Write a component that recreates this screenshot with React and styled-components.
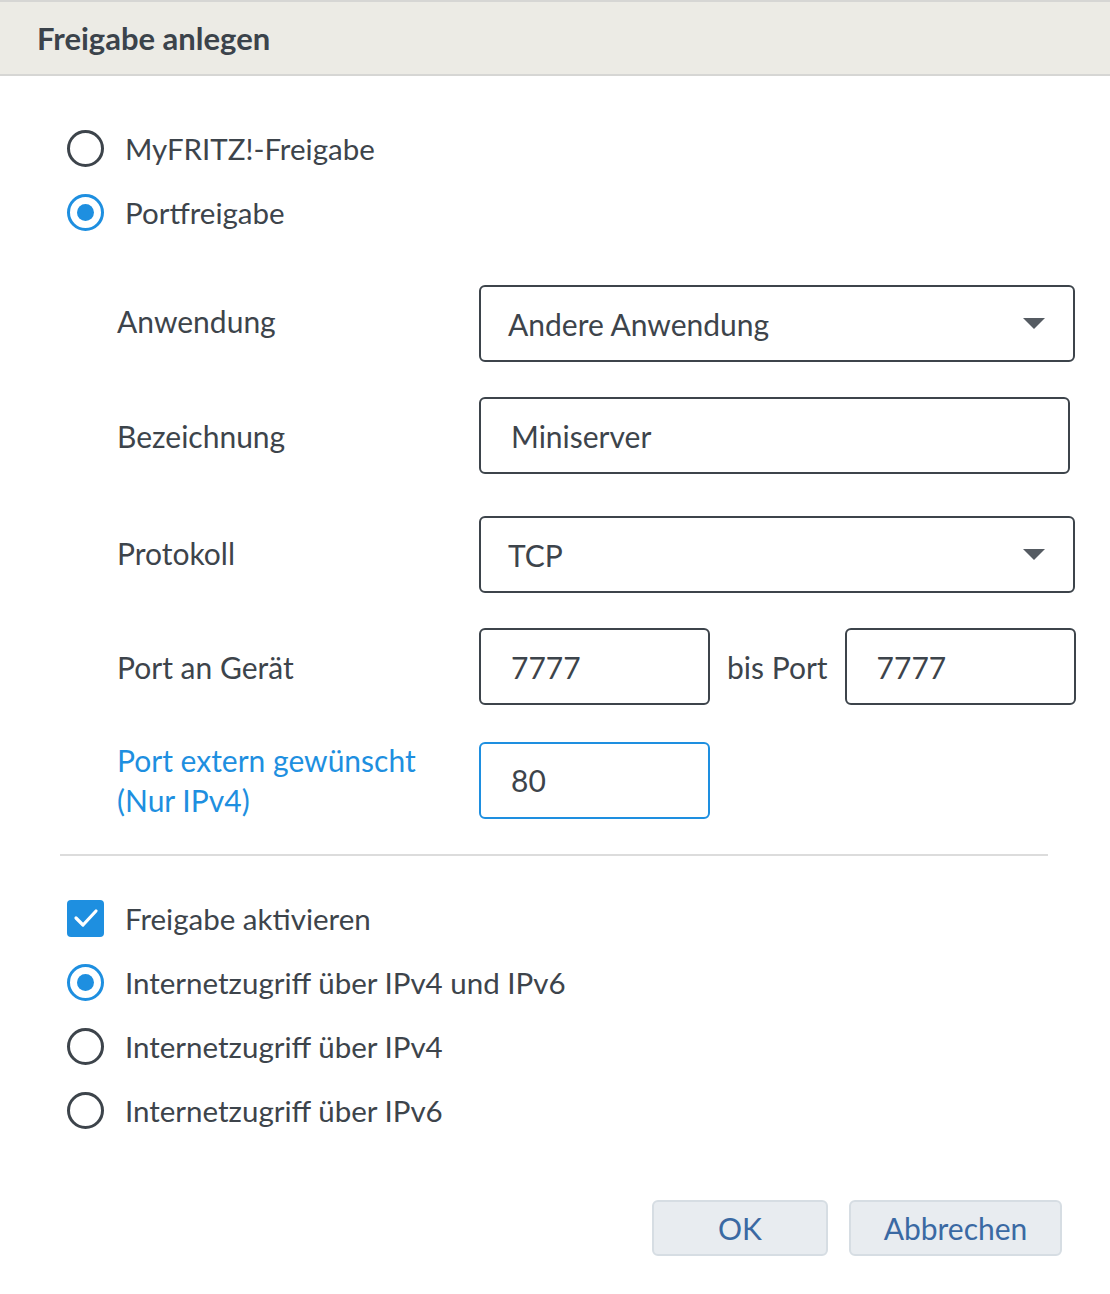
import React from 'react';
import styled, { createGlobalStyle, css } from 'styled-components';

const GlobalStyle = createGlobalStyle`
  body {
    margin: 0;
    background: #ffffff;
    font-family: Lato, "Noto Sans", sans-serif;
    color: #3d444b;
  }
`;

const Dialog = styled.div`
  width: 1110px;
  min-height: 1294px;
  background: #fff;
`;

const Header = styled.div`
  height: 72px;
  border-top: 2px solid #d6d6d4;
  border-bottom: 2px solid #d6d6d4;
  background: #ecebe5;
  display: flex;
  align-items: center;
  padding-left: 37px;
  font-size: 31px;
  font-weight: 700;
  color: #3b434b;
`;

const Body = styled.div`
  padding: 40px 62px 0 67px;
`;

const OptionList = styled.div`
  display: flex;
  flex-direction: column;
  margin-top: ${({ top }) => top || 0}px;
`;

const Option = styled.label`
  height: 64px;
  display: flex;
  align-items: center;
  gap: 21px;
  font-size: 29.5px;
`;

const RadioDot = styled.span`
  box-sizing: border-box;
  width: 37px;
  height: 37px;
  border-radius: 50%;
  border: 3px solid #3d444b;
  display: flex;
  align-items: center;
  justify-content: center;
  flex-shrink: 0;

  ${({ checked }) =>
    checked &&
    css`
      border-color: #1e8fe0;
      &::after {
        content: '';
        width: 17px;
        height: 17px;
        border-radius: 50%;
        background: #1e8fe0;
      }
    `}
`;

const CheckBox = styled.span`
  width: 37px;
  height: 37px;
  border-radius: 4px;
  background: #1e8fe0;
  display: flex;
  align-items: center;
  justify-content: center;
  flex-shrink: 0;
`;

const FormGrid = styled.div`
  margin-top: 41px;
  margin-left: 50px;
  display: grid;
  grid-template-columns: 362px 1fr;
  row-gap: 35px;
  align-items: center;
`;

const Label = styled.div`
  font-size: 30px;
  line-height: 40px;
  margin-top: ${({ shift }) => shift || 0}px;
  color: ${({ accent }) => (accent ? '#1e8fe0' : '#3d444b')};
`;

const FieldRow = styled.div`
  display: flex;
  align-items: center;
  gap: 17px;
  font-size: 30px;
  white-space: nowrap;
`;

const Field = styled.div`
  box-sizing: border-box;
  height: 77px;
  width: ${({ w }) => w}px;
  margin-top: ${({ shift }) => shift || 0}px;
  border: 2px solid ${({ focus }) => (focus ? '#1e8fe0' : '#3d444b')};
  border-radius: 6px;
  display: flex;
  align-items: center;
  justify-content: space-between;
  padding: 0 28px 0 ${({ pad }) => pad || 27}px;
  font-size: 30px;
  color: #3d444b;
`;

const Caret = styled.span`
  width: 0;
  height: 0;
  border-left: 11px solid transparent;
  border-right: 11px solid transparent;
  border-top: 11px solid #555b62;
`;

const Divider = styled.hr`
  margin: 34px 0 0 -7px;
  border: 0;
  border-top: 2px solid #dcdcdc;
  width: 988px;
`;

const Actions = styled.div`
  margin-top: 58px;
  display: flex;
  justify-content: flex-end;
  gap: 21px;
  margin-right: -14px;
`;

const Button = styled.button`
  box-sizing: border-box;
  height: 56px;
  width: ${({ w }) => w}px;
  background: #e8ecf0;
  border: 2px solid #d6dde3;
  border-radius: 6px;
  font-family: inherit;
  font-size: 30px;
  color: #3a69a3;
`;

const CheckMark = () => (
  <svg width="26" height="20" viewBox="0 0 26 20">
    <path d="M3 10 L10 17 L23 3" fill="none" stroke="#fff" strokeWidth="3.2" strokeLinecap="round" strokeLinejoin="round" />
  </svg>
);

export default function App() {
  return (
    <Dialog>
      <GlobalStyle />
      <Header>Freigabe anlegen</Header>
      <Body>
        <OptionList>
          <Option>
            <RadioDot />
            MyFRITZ!-Freigabe
          </Option>
          <Option>
            <RadioDot checked />
            Portfreigabe
          </Option>
        </OptionList>

        <FormGrid>
          <Label shift={-6}>Anwendung</Label>
          <Field w={596}>
            Andere Anwendung
            <Caret />
          </Field>

          <Label>Bezeichnung</Label>
          <Field w={591} pad={30}>Miniserver</Field>

          <Label shift={4}>Protokoll</Label>
          <Field w={596} shift={7}>
            TCP
            <Caret />
          </Field>

          <Label>Port an Gerät</Label>
          <FieldRow>
            <Field w={231} pad={30}>7777</Field>
            bis Port
            <Field w={231} pad={30}>7777</Field>
          </FieldRow>

          <Label accent>
            Port extern gewünscht
            <br />
            (Nur IPv4)
          </Label>
          <Field w={231} pad={30} focus>80</Field>
        </FormGrid>

        <Divider />

        <OptionList top={30}>
          <Option>
            <CheckBox>
              <CheckMark />
            </CheckBox>
            Freigabe aktivieren
          </Option>
          <Option>
            <RadioDot checked />
            Internetzugriff über IPv4 und IPv6
          </Option>
          <Option>
            <RadioDot />
            Internetzugriff über IPv4
          </Option>
          <Option>
            <RadioDot />
            Internetzugriff über IPv6
          </Option>
        </OptionList>

        <Actions>
          <Button w={176}>OK</Button>
          <Button w={213}>Abbrechen</Button>
        </Actions>
      </Body>
    </Dialog>
  );
}
